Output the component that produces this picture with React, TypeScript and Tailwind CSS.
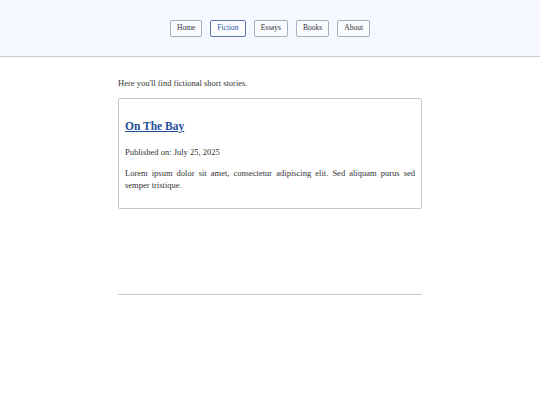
import React from "react";

export default function App() {
  const nav = ["Home", "Fiction", "Essays", "Books", "About"];
  return (
    <div className="min-h-[405px] bg-white text-[#333]" style={{ fontFamily: '"Liberation Serif", Georgia, serif' }}>
      <header className="h-[57px] bg-[#f5f8ff] border-b border-[#c9c9d4] flex items-center justify-center gap-2">
        {nav.map((n) => (
          <button
            key={n}
            className={
              "h-[17px] px-[6px] text-[7.5px] leading-none rounded-[2px] border bg-white/40 " +
              (n === "Fiction" ? "border-[#5a78a8] text-[#2a56a0]" : "border-[#a9aebb] text-[#333]")
            }
          >
            {n}
          </button>
        ))}
      </header>
      <main className="w-[304px] mx-auto pt-[20px]">
        <p className="text-[8.5px] leading-[12px] text-[#333]">Here you'll find fictional short stories.</p>
        <div className="mt-[9px] border border-[#c6c6cc] rounded-[2px] px-[6px] pt-[20px] pb-[17px]">
          <h2 className="text-[11.5px] font-bold leading-[14px]">
            <a className="text-[#1f4e9a] underline">On The Bay</a>
          </h2>
          <p className="mt-[13px] text-[8.5px] leading-[12px]">Published on: July 25, 2025</p>
          <p className="mt-[9px] text-[8.5px] leading-[12px] text-justify">
            Lorem ipsum dolor sit amet, consectetur adipiscing elit. Sed aliquam purus sed semper tristique.
          </p>
        </div>
        <hr className="mt-[85px] border-t border-[#c8c8c8]" />
      </main>
    </div>
  );
}
